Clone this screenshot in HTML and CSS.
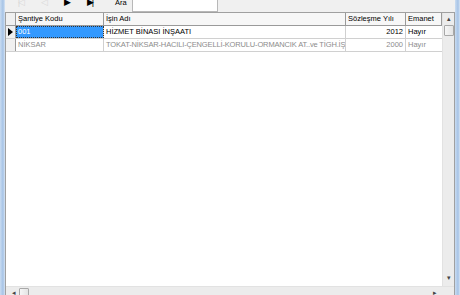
FILE: index.html
```html
<!DOCTYPE html>
<html lang="tr">
<head>
    <meta charset="UTF-8">
    <title>Şantiye Listesi</title>
    <link rel="stylesheet" href="styles.css">
</head>
<body>
    <div class="window">
        <div class="frame"></div>
        <div class="client">
            <div class="toolbar">
                <span class="nav-btn disabled">|&#9665;</span>
                <span class="nav-btn disabled">&#9665;</span>
                <span class="nav-btn">&#9654;</span>
                <span class="nav-btn">&#9654;|</span>
                <label class="search-label">Ara</label>
                <span class="search-box"></span>
            </div>

            <div class="grid">
                <div class="grid-body">
                    <div class="grid-main">
                        <div class="row header">
                            <div class="cell ind"></div>
                            <div class="cell c-kod">Şantiye Kodu</div>
                            <div class="cell c-ad">İşin Adı</div>
                            <div class="cell c-yil">Sözleşme Yılı</div>
                            <div class="cell c-em">Emanet</div>
                        </div>
                        <div class="row">
                            <div class="cell ind"><span class="arrow"></span></div>
                            <div class="cell c-kod selected">001</div>
                            <div class="cell c-ad">HİZMET BİNASI İNŞAATI</div>
                            <div class="cell c-yil num">2012</div>
                            <div class="cell c-em">Hayır</div>
                        </div>
                        <div class="row muted">
                            <div class="cell ind"></div>
                            <div class="cell c-kod">NİKSAR</div>
                            <div class="cell c-ad">TOKAT-NİKSAR-HACILI-ÇENGELLİ-KORULU-ORMANCIK AT..ve TİGH.İŞLERİ</div>
                            <div class="cell c-yil num">2000</div>
                            <div class="cell c-em">Hayır</div>
                        </div>
                    </div>
                    <div class="vscroll">
                        <span class="sb-arrow">&#9652;</span>
                        <span class="sb-thumb"></span>
                        <span class="sb-fill"></span>
                        <span class="sb-arrow down">&#9662;</span>
                    </div>
                </div>
                <div class="hscroll">
                    <span class="sb-arrow">&#9666;</span>
                    <span class="sb-thumb h"></span>
                    <span class="sb-fill"></span>
                    <span class="sb-arrow">&#9656;</span>
                </div>
            </div>
        </div>
        <div class="frame"></div>
    </div>
</body>
</html>
```

FILE: styles.css
```css
* {
    margin: 0;
    padding: 0;
    box-sizing: border-box;
}

body {
    font-family: "Liberation Sans", Arial, sans-serif;
    font-size: 7.5px;
    color: #000;
    background: #f0f0f0;
}

.window {
    display: flex;
    width: 460px;
    height: 295px;
    overflow: hidden;
}

.frame {
    width: 5px;
    background: linear-gradient(to right, #c9dcf1, #a6c3e6 60%, #d6e4f4);
}

.client {
    flex: 1;
    display: flex;
    flex-direction: column;
    background: #f0f0f0;
}

/* toolbar, cut off at the top */
.toolbar {
    height: 13px;
    display: flex;
    align-items: flex-end;
    padding: 0 0 5px 4px;
    border-bottom: 1px solid #a0a0a0;
    overflow: hidden;
}

.nav-btn {
    width: 23px;
    font-size: 9px;
    line-height: 9px;
    text-align: center;
    color: #000;
    letter-spacing: -2px;
}

.nav-btn.disabled {
    color: #d8d8d8;
}

.search-label {
    margin-left: 14px;
    line-height: 8px;
    color: #000;
}

.search-box {
    width: 86px;
    height: 18px;
    margin-left: 5px;
    margin-bottom: -5px;
    background: #fff;
    border: 1px solid #b8b8b8;
    border-top: none;
}

/* grid */
.grid {
    flex: 1;
    display: flex;
    flex-direction: column;
    background: #fff;
    border-left: 1px solid #a0a0a0;
    border-right: 1px solid #a0a0a0;
    min-height: 0;
}

.grid-body {
    flex: 1;
    display: flex;
    min-height: 0;
}

.grid-main {
    flex: 1;
    background: #fff;
}

.row {
    display: flex;
    height: 13px;
    border-bottom: 1px solid #d0d0d0;
}

.row.header {
    background: #f7f7f7;
    border-bottom: 1px solid #9a9a9a;
}

.cell {
    padding: 0 2px;
    line-height: 12px;
    white-space: nowrap;
    overflow: hidden;
    border-right: 1px solid #d0d0d0;
}

.header .cell {
    border-right: 1px solid #9a9a9a;
}

.cell.ind {
    width: 10px;
    padding: 0;
    background: #f0f0f0;
    border-right: 1px solid #9a9a9a;
    position: relative;
}

.arrow {
    position: absolute;
    left: 2px;
    top: 2px;
    border-left: 5px solid #000;
    border-top: 4px solid transparent;
    border-bottom: 4px solid transparent;
}

.c-kod { width: 88px; }
.c-ad { width: 242px; }
.c-yil { width: 60px; }
.c-em { width: 36px; border-right: none; }

.num {
    text-align: right;
}

.selected {
    background: #3399ff;
    color: #fff;
    outline: 1px dotted #333;
    outline-offset: -1px;
}

.muted .cell {
    color: #8c8c8c;
}

.muted .c-ad {
    letter-spacing: -0.15px;
}

/* scrollbars */
.vscroll {
    width: 12px;
    display: flex;
    flex-direction: column;
    align-items: center;
    background: #ececec;
    border-left: 1px solid #e2e2e2;
}

.hscroll {
    height: 9px;
    display: flex;
    align-items: flex-start;
    background: #ececec;
    border-top: 1px solid #e2e2e2;
    padding-left: 2px;
    padding-right: 14px;
}

.sb-arrow {
    width: 11px;
    height: 12px;
    font-size: 7px;
    line-height: 12px;
    text-align: center;
    color: #444;
}

.sb-arrow.down {
    margin-bottom: 2px;
}

.sb-thumb {
    width: 10px;
    height: 11px;
    background: linear-gradient(to right, #f6f6f6, #e4e4e4);
    border: 1px solid #a8a8a8;
    border-radius: 1px;
}

.sb-thumb.h {
    height: 10px;
    margin-top: 1px;
}

.sb-fill {
    flex: 1;
}
```
